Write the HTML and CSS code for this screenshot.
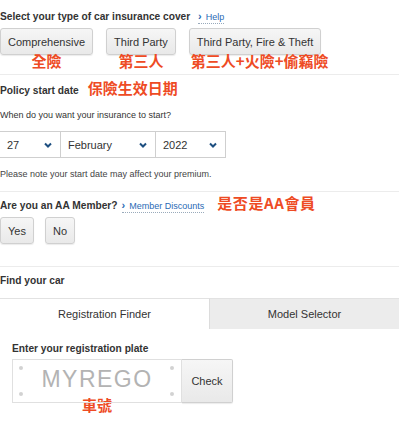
FILE: index.html
```html
<html>

<head>
    <meta charset="utf-8">
    <link rel="stylesheet" href="styles.css">
</head>

<body>
    <!-- cover type -->
    <div class="section cover">
        <div class="q-title">Select your type of car insurance cover
            <a class="help-link"><span class="chev">&#8250;</span>Help</a>
        </div>
        <div class="cover-options">
            <div class="cover-col">
                <button class="btn">Comprehensive</button>
                <div class="note">全險</div>
            </div>
            <div class="cover-col">
                <button class="btn">Third Party</button>
                <div class="note">第三人</div>
            </div>
            <div class="cover-col">
                <button class="btn">Third Party, Fire &amp; Theft</button>
                <div class="note note-wide">第三人+火險+偷竊險</div>
            </div>
        </div>
    </div>
    <div class="divider"></div>

    <!-- start date -->
    <div class="section start-date">
        <div class="title-row">
            <span class="q-title">Policy start date</span>
            <span class="note">保險生效日期</span>
        </div>
        <div class="hint">When do you want your insurance to start?</div>
        <div class="date-group">
            <div class="date-select day">
                <span>27</span>
                <svg width="8" height="6" viewBox="0 0 8 6"><polyline points="1,1.5 4,4.5 7,1.5" /></svg>
            </div>
            <div class="date-select month">
                <span>February</span>
                <svg width="8" height="6" viewBox="0 0 8 6"><polyline points="1,1.5 4,4.5 7,1.5" /></svg>
            </div>
            <div class="date-select year">
                <span>2022</span>
                <svg width="8" height="6" viewBox="0 0 8 6"><polyline points="1,1.5 4,4.5 7,1.5" /></svg>
            </div>
        </div>
        <div class="hint small-note">Please note your start date may affect your premium.</div>
    </div>
    <div class="divider"></div>

    <!-- membership -->
    <div class="section member">
        <div class="title-row">
            <span class="q-title">Are you an AA Member?</span>
            <a class="help-link"><span class="chev">&#8250;</span>Member Discounts</a>
            <span class="note">是否是AA會員</span>
        </div>
        <div class="yes-no">
            <button class="btn">Yes</button>
            <button class="btn">No</button>
        </div>
    </div>
    <div class="divider"></div>

    <!-- find car -->
    <div class="section find-car">
        <div class="q-title">Find your car</div>
        <div class="tabs">
            <div class="tab active">Registration Finder</div>
            <div class="tab">Model Selector</div>
        </div>
        <div class="reg-panel">
            <div class="q-title">Enter your registration plate</div>
            <div class="plate-row">
                <div class="plate">
                    <span class="bolt tl"></span>
                    <span class="bolt tr"></span>
                    <span class="bolt bl"></span>
                    <span class="bolt br"></span>
                    MYREGO
                </div>
                <button class="btn check">Check</button>
            </div>
            <div class="note plate-note">車號</div>
        </div>
    </div>
</body>

</html>
```

FILE: styles.css
```css
* {
    margin: 0;
    padding: 0;
    box-sizing: border-box;
}

html {
    background: white;
}

body {
    font-family: "Liberation Sans", Arial, sans-serif;
    color: #333;
    width: 399px;
    overflow: hidden;
}

.q-title {
    font-size: 10.2px;
    font-weight: bold;
    line-height: 14px;
    color: #333;
}

.help-link {
    font-size: 9px;
    font-weight: normal;
    color: #2a6ab5;
    border-bottom: 1px dotted #9ab;
    margin-left: 5px;
    padding-bottom: 1px;
}

.help-link .chev {
    font-weight: bold;
    font-size: 11px;
    margin-right: 4px;
}

.note {
    font-family: "Noto Sans CJK TC", "Liberation Sans", sans-serif;
    font-size: 15px;
    font-weight: bold;
    line-height: 16px;
    color: #ee4b24;
    white-space: nowrap;
}

.divider {
    height: 1px;
    background: #ececec;
}

/* buttons */

.btn {
    font-family: "Liberation Sans", Arial, sans-serif;
    font-size: 11px;
    color: #333;
    height: 27px;
    padding: 0 7px;
    border: 1px solid #d0d0d0;
    border-radius: 3px;
    background: linear-gradient(#f6f6f6, #e9e9e9);
    box-shadow: 0 1px 1px rgba(0, 0, 0, 0.08);
}

/* cover type */

.cover {
    padding-top: 9px;
}

.cover-options {
    display: flex;
    gap: 13px;
    margin-top: 4px;
    padding-bottom: 5px;
}

.cover-col {
    display: flex;
    flex-direction: column;
    align-items: stretch;
}

.cover-col .btn {
    align-self: flex-start;
}

.cover-col .note {
    contain: inline-size;
    text-align: center;
    margin-top: -2px;
}

.cover-col .note-wide {
    text-align: left;
    padding-left: 2px;
}

/* start date */

.title-row {
    display: flex;
    align-items: baseline;
}

.start-date {
    padding-top: 4px;
}

.start-date .title-row .note {
    margin-left: 9px;
    line-height: 18px;
}

.hint {
    font-size: 9px;
    line-height: 12px;
    color: #333;
    margin-top: 11px;
}

.date-group {
    display: flex;
    margin-top: 10px;
    margin-left: -1px;
}

.date-select {
    display: flex;
    align-items: center;
    justify-content: space-between;
    height: 27px;
    border: 1px solid #cfcfcf;
    font-size: 11px;
    color: #333;
    padding: 0 8px 0 7px;
}

.date-select + .date-select {
    margin-left: -1px;
}

.date-select svg polyline {
    fill: none;
    stroke: #1d4f80;
    stroke-width: 2;
}

.day {
    width: 62px;
}

.month {
    width: 96px;
}

.year {
    width: 71px;
}

.small-note {
    margin-top: 10px;
    padding-bottom: 11px;
    color: #444;
}

/* membership */

.member {
    padding-top: 2px;
}

.member .help-link {
    margin-left: 4px;
}

.member .title-row .note {
    margin-left: 13px;
    line-height: 18px;
    letter-spacing: 0.6px;
}

.yes-no {
    display: flex;
    gap: 11px;
    margin-top: 4px;
    padding-bottom: 22px;
}

/* find car */

.find-car {
    padding-top: 7px;
}

.tabs {
    display: flex;
    margin-top: 10px;
}

.tab {
    flex: 1;
    height: 31px;
    font-size: 11px;
    display: flex;
    align-items: center;
    justify-content: center;
    border-top: 1px solid #e2e2e2;
    background: #ececec;
    color: #333;
}

.tab.active {
    flex: 0 0 210px;
    background: white;
    border-right: 1px solid #dcdcdc;
}

.reg-panel {
    padding: 13px 12px 0 12px;
}

.plate-row {
    display: flex;
    margin-top: 3px;
}

.plate {
    position: relative;
    width: 170px;
    height: 44px;
    border: 1px solid #e0e0e0;
    display: flex;
    align-items: center;
    justify-content: center;
    font-size: 23px;
    letter-spacing: 1.5px;
    color: #b3b3b3;
    padding-bottom: 3px;
}

.bolt {
    position: absolute;
    width: 4px;
    height: 4px;
    border-radius: 50%;
    background: #d2d2d2;
}

.bolt.tl { left: 6px; top: 6px; }
.bolt.tr { right: 7px; top: 6px; }
.bolt.bl { left: 6px; bottom: 6px; }
.bolt.br { right: 7px; bottom: 6px; }

.btn.check {
    height: 44px;
    width: 51px;
    border-radius: 0 2px 2px 0;
    border-left: 0;
    padding: 0;
}

.plate-note {
    width: 170px;
    text-align: center;
    margin-top: -6px;
}
```
